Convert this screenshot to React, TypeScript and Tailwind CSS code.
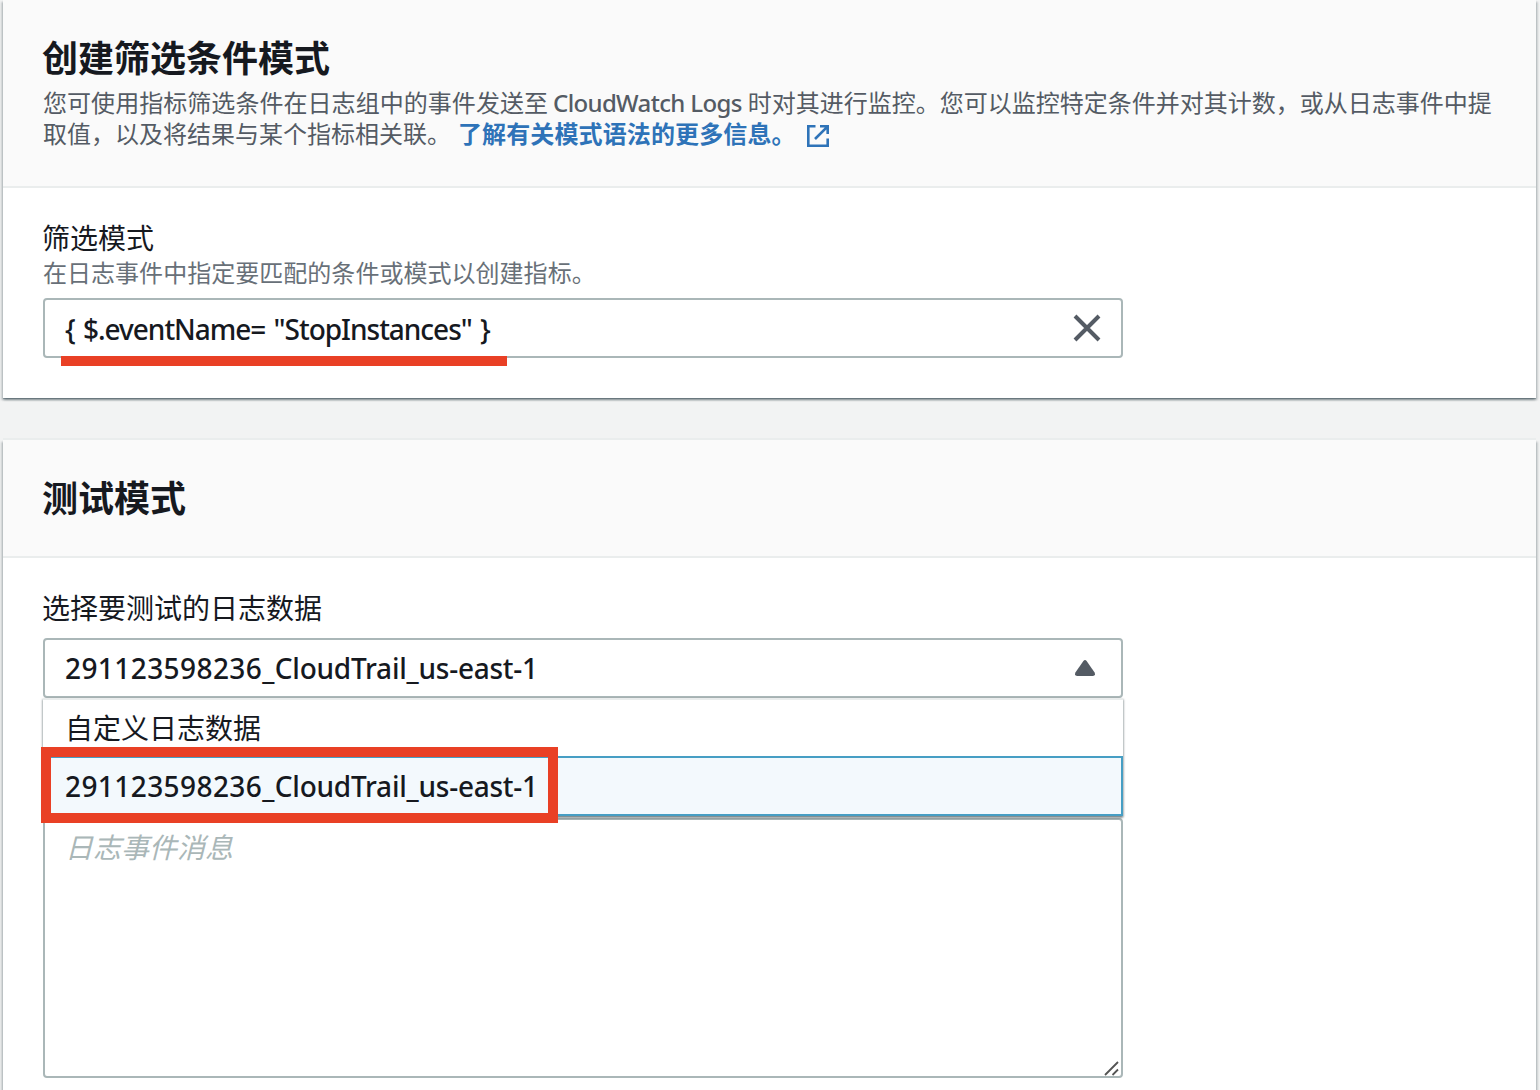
import type { ReactNode } from 'react';

function Latin({ children, className = '' }: { children: ReactNode; className?: string }) {
  return (
    <span className={`font-['Noto_Sans','Noto_Sans_CJK_SC',sans-serif] font-medium whitespace-pre ${className}`}>{children}</span>
  );
}

function TrailName() {
  return (
    <Latin className="tracking-[-0.24px]">
      <span className="tracking-[0.42px]">291123598236_</span>CloudTrail_us-east-1
    </Latin>
  );
}

function Card({ header, children, className = '' }: { header: ReactNode; children: ReactNode; className?: string }) {
  return (
    <section
      className={`bg-white shadow-[0_2px_2px_0_rgba(0,28,36,0.3),2px_2px_2px_0_rgba(0,28,36,0.15),-2px_2px_2px_0_rgba(0,28,36,0.15),0_1px_0_0_rgba(100,120,128,0.3),0_-2px_0_0_#eaeded] ${className}`}
    >
      <header className="border-b-2 border-[#eaeded] bg-[#fafafa] px-10">{header}</header>
      <div className="px-10">{children}</div>
    </section>
  );
}

function ExternalIcon() {
  return (
    <svg className="ml-[11px] inline-block h-[22px] w-[22px] align-[-4px]" viewBox="0 0 22 22" fill="none" stroke="#2e73b8" strokeWidth="2.6">
      <path d="M8.500 1.300H1.300v19.400h19.400V13.500" />
      <path d="M13 1.300h7.700V9M20.700 1.300 8 14" />
    </svg>
  );
}

export default function App() {
  return (
    <main className="h-[1090px] w-[1540px] overflow-hidden bg-[#f2f3f3] pl-[3px] pr-1 font-['Noto_Sans_CJK_SC',sans-serif] text-[28px] text-[#16191f]">
      <Card
        className="h-[398px]"
        header={
          <div className="h-[186px] pt-[34px]">
            <h1 className="-ml-px h-[53px] text-[36px] leading-[44px] font-bold">创建筛选条件模式</h1>
            <p className="text-[24px] leading-[30px] whitespace-nowrap text-[#545b64]">
              <span className="tracking-[0.05px]">您可使用指标筛选条件在日志组中的事件发送至</span>
              <Latin className="mr-[6px] ml-[5px] tracking-[-0.65px]">CloudWatch Logs</Latin>
              时对其进行监控。您可以监控特定条件并对其计数，或从日志事件中提
              <br />
              取值，以及将结果与某个指标相关联。
              <a className="ml-[7px] font-bold tracking-[0.12px] text-[#2e73b8]">
                了解有关模式语法的更多信息。
                <ExternalIcon />
              </a>
            </p>
          </div>
        }
      >
        <div className="pt-[31px]">
          <label className="-ml-px block h-[35px] leading-9">筛选模式</label>
          <p className="h-11 text-[24px] leading-[36px] tracking-[0.03px] text-[#687078]">在日志事件中指定要匹配的条件或模式以创建指标。</p>
          <div className="relative flex h-[60px] w-[1080px] items-center justify-between rounded-[4px] border-2 border-[#aab7b8] bg-white pr-5 pl-5">
            <Latin className="relative top-px tracking-[-1.02px] [word-spacing:2px]">{'{ $.eventName= "StopInstances" }'}</Latin>
            <svg className="h-7 w-7" viewBox="0 0 28 28" stroke="#545b64" strokeWidth="4">
              <path d="M2 2l24 24M26 2 2 26" />
            </svg>
            <div className="absolute top-[56px] left-4 h-[10px] w-[446px] bg-[#e94025]" />
          </div>
        </div>
      </Card>

      <Card
        className="mt-[42px] h-[700px]"
        header={<h2 className="-ml-px h-[116px] pt-[34px] text-[36px] leading-[44px] font-bold">测试模式</h2>}
      >
        <div className="pt-[31px]">
          <label className="-ml-px block h-[49px] leading-9">选择要测试的日志数据</label>
          <div className="relative h-[60px] w-[1080px]">
            <div className="flex h-[60px] items-center justify-between rounded-[4px] border-2 border-[#aab7b8] bg-white px-5">
              <TrailName />
              <svg className="mr-1.5 h-4 w-5" viewBox="0 0 20 16" fill="#545b64">
                <path d="M8.400.9Q10-.8 11.600.9l8 11.600Q20.800 16 17.800 16H2.200Q-.8 16 .4 12.500Z" />
              </svg>
            </div>
            <div className="absolute top-[60px] left-0 z-10 h-[118px] w-[1080px] bg-white shadow-[0_2px_2px_0_rgba(0,28,36,0.35),1px_1px_2px_0_rgba(0,28,36,0.2),-1px_1px_2px_0_rgba(0,28,36,0.2)]">
              <div className="h-[58px] border-t-2 border-[#eaeded] pl-[22px] leading-[54px]">自定义日志数据</div>
              <div className="flex h-[60px] items-center border-2 border-[#469ec4] bg-[#f3f9fd] pl-5">
                <TrailName />
              </div>
              <div className="absolute top-[49px] left-[-2px] h-[76px] w-[517px] border-10 border-[#e94025]" />
            </div>
          </div>
          <div className="relative mt-[120px] h-[260px] w-[1080px] rounded-[4px] border-2 border-[#aab7b8] bg-white pt-1.5 pl-5">
            <p className="leading-[40px] text-[#aab7b8] italic">日志事件消息</p>
            <svg className="absolute right-[1px] bottom-0 h-4 w-4" viewBox="0 0 16 16" stroke="#545454" strokeWidth="1.8">
              <path d="M1 15 14 2M8.500 15 14 9.500" />
            </svg>
          </div>
        </div>
      </Card>
    </main>
  );
}
